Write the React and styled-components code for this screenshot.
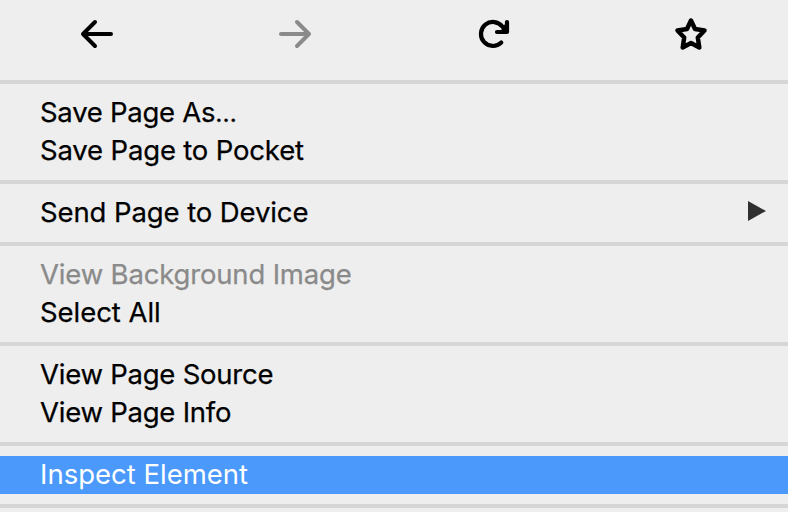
import React from 'react';
import styled, { createGlobalStyle } from 'styled-components';

const Global = createGlobalStyle`
  body { margin: 0; background: #eeeeee; overflow: hidden; }
`;
const Menu = styled.div`
  width: 788px; height: 512px; overflow: hidden; background: #eeeeee;
  font-family: Inter, sans-serif; font-size: 27.5px; color: #000;
`;
const Toolbar = styled.div`
  display: grid; grid-template-columns: repeat(4, 198px); margin-left: -2px; height: 80px;
`;
const Tool = styled.div`
  display: flex; justify-content: center; padding-top: 16px;
  color: ${p => (p.$disabled ? '#8a8a8a' : '#000')};
`;
const ToolIcon = styled.svg.attrs({ viewBox: '0 0 36 36' })`
  display: block; width: 36px; height: 36px; fill: none; stroke: currentColor;
  stroke-width: ${p => p.$weight || 4}; stroke-linecap: round; stroke-linejoin: round;
`;
const Separator = styled.div`
  height: 4px; background: #d6d6d6;
`;
const Group = styled.div`
  padding: 10px 0;
`;
const Item = styled.div`
  box-sizing: border-box; height: 38px; display: flex; align-items: center; justify-content: space-between;
  padding: 0 22px 2px 40px; white-space: nowrap;
  color: ${p => (p.$disabled ? '#8a8a8a' : p.$selected ? '#fff' : '#000')};
  background: ${p => (p.$selected ? '#4a99fb' : 'transparent')};
  -webkit-text-stroke: ${p => (p.$selected ? 0 : 0.25)}px currentColor;
`;
const Label = styled.span`
  letter-spacing: ${p => p.$track || 0}px;
`;
const Ellipsis = styled.span`
  font-size: 25px;
`;
const SubmenuArrow = styled.svg.attrs({ viewBox: '0 0 18 20' })`
  width: 18px; height: 20px; margin-bottom: 2px; fill: #303030;
`;

export default function App() {
  return (
    <Menu>
      <Global />
      <Toolbar>
        <Tool><ToolIcon><path d="M32 18H4M16 6L4 18L16 30" /></ToolIcon></Tool>
        <Tool $disabled><ToolIcon><path d="M4 18H32M20 6L32 18L20 30" /></ToolIcon></Tool>
        <Tool><ToolIcon $weight={4.2}><path d="M26.300 26.600A12 12 0 1 1 27.500 10.700L31 15M32 6V16H22M28.500 13L31 10" /></ToolIcon></Tool>
        <Tool><ToolIcon $weight={4.5}><path d="M18 4.500L22 13L31.500 14.500L24.800 21.500L26.300 31.500L18 27L9.700 31.500L11.200 21.500L4.500 14.500L14 13Z" /></ToolIcon></Tool>
      </Toolbar>
      <Separator />
      <Group>
        <Item><Label $track={-0.27}>Save Page As<Ellipsis>…</Ellipsis></Label></Item>
        <Item><Label $track={-0.17}>Save Page to Pocket</Label></Item>
      </Group>
      <Separator />
      <Group>
        <Item>
          <Label $track={-0.1}>Send Page to Device</Label>
          <SubmenuArrow><path d="M0 0L18 10L0 20Z" /></SubmenuArrow>
        </Item>
      </Group>
      <Separator />
      <Group>
        <Item $disabled><Label $track={-0.17}>View Background Image</Label></Item>
        <Item><Label $track={-0.05}>Select All</Label></Item>
      </Group>
      <Separator />
      <Group>
        <Item><Label $track={-0.24}>View Page Source</Label></Item>
        <Item><Label $track={-0.24}>View Page Info</Label></Item>
      </Group>
      <Separator />
      <Group>
        <Item $selected><Label>Inspect Element</Label></Item>
      </Group>
      <Separator />
    </Menu>
  );
}
